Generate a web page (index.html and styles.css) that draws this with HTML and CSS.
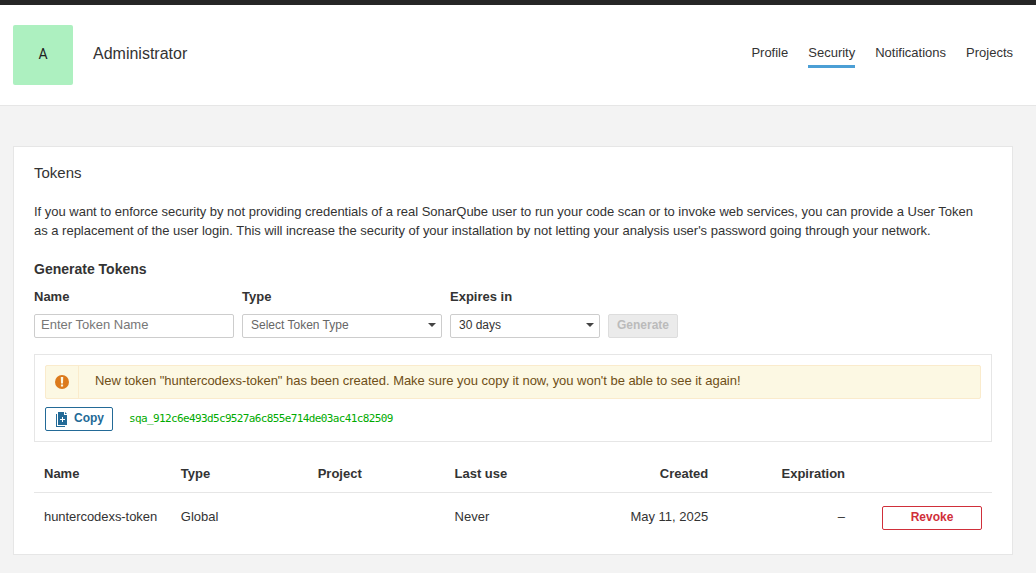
FILE: index.html
```html
<!DOCTYPE html>
<html lang="en">
<head>
<meta charset="utf-8">
<title>Security</title>
<link rel="stylesheet" href="styles.css">
</head>
<body>
<div class="topbar"></div>
<header class="header">
  <div class="avatar">A</div>
  <h1 class="user">Administrator</h1>
  <nav class="tabs">
    <a class="tab">Profile</a>
    <a class="tab active">Security</a>
    <a class="tab">Notifications</a>
    <a class="tab">Projects</a>
  </nav>
</header>
<main class="card">
  <h2 class="title">Tokens</h2>
  <p class="intro">If you want to enforce security by not providing credentials of a real SonarQube user to run your code scan or to invoke web services, you can provide a User Token as a replacement of the user login. This will increase the security of your installation by not letting your analysis user's password going through your network.</p>
  <h3 class="subtitle">Generate Tokens</h3>
  <form class="form">
    <div class="field wide">
      <label class="label">Name</label>
      <input class="input" type="text" placeholder="Enter Token Name">
    </div>
    <div class="field wide">
      <label class="label">Type</label>
      <div class="select placeholder"><span>Select Token Type</span><i class="caret"></i></div>
    </div>
    <div class="field">
      <label class="label">Expires in</label>
      <div class="select"><span>30 days</span><i class="caret"></i></div>
    </div>
    <button class="button generate" type="button" disabled>Generate</button>
  </form>
  <section class="panel">
    <div class="alert">
      <div class="alert-icon">
        <svg width="16" height="16" viewBox="0 0 16 16"><circle cx="8" cy="8" r="7" fill="#dc7a1c"/><path fill="#fcf8e3" d="M6.8 3h2.4l-.2 6.4H7zM6.9 10.5h2.2v2.1H6.9z"/></svg>
      </div>
      <div class="alert-text">New token "huntercodexs-token" has been created. Make sure you copy it now, you won't be able to see it again!</div>
    </div>
    <div class="copy-row">
      <button class="button copy" type="button">
        <svg class="copy-icon" width="16" height="16" viewBox="0 0 16 16"><g fill="#236a97"><path d="M4 1h6v3h3v10H4z"/><path d="M11 1l2 2h-2z"/><path d="M2 3h1v12h8v1H2z"/></g><path d="M8.5 6v5M6 8.5h5" stroke="#fff" fill="none"/></svg>
        <span>Copy</span>
      </button>
      <code class="token">sqa_912c6e493d5c9527a6c855e714de03ac41c82509</code>
    </div>
  </section>
  <table class="table">
    <thead>
      <tr><th>Name</th><th>Type</th><th>Project</th><th>Last use</th><th class="right">Created</th><th class="right">Expiration</th><th></th></tr>
    </thead>
    <tbody>
      <tr><td>huntercodexs-token</td><td>Global</td><td></td><td>Never</td><td class="right">May 11, 2025</td><td class="right">–</td><td class="right"><button class="button revoke" type="button">Revoke</button></td></tr>
    </tbody>
  </table>
</main>
</body>
</html>
```
FILE: styles.css
```css
* { box-sizing: border-box; }
body {
  margin: 0;
  height: 573px;
  overflow: hidden;
  background: #f3f3f3;
  color: #333;
  font: 13px/19px "Liberation Sans", Arial, sans-serif;
}
h1, h2, h3, p { margin: 0; }
.topbar { height: 5px; background: #262626; }
.header {
  display: flex;
  align-items: flex-start;
  height: 101px;
  padding: 20px 23px 0 13px;
  background: #fff;
  border-bottom: 1px solid #e6e6e6;
}
.avatar {
  width: 60px;
  height: 60px;
  border-radius: 2px;
  background: #adf0c0;
  color: #222;
  font: 14px/59px Roboto, sans-serif;
  text-align: center;
}
.user { margin: 17px 0 0 20px; font-size: 16px; line-height: 24px; font-weight: 400; }
.tabs { display: flex; gap: 20px; margin: 18px 0 0 auto; }
.tab { height: 25px; border-bottom: 3px solid transparent; }
.tab.active { border-color: #4b9fd5; }
.card {
  width: 1000px;
  height: 409px;
  margin: 40px 0 0 13px;
  padding: 16px 20px 0;
  background: #fff;
  border: 1px solid #e6e6e6;
}
.title { font-size: 15px; line-height: 20px; font-weight: 400; }
.intro { margin-top: 19px; padding-right: 12px; letter-spacing: -0.015px; }
.subtitle { margin-top: 19px; font-size: 14px; line-height: 20px; }
.form { display: flex; align-items: flex-end; gap: 8px; margin-top: 8px; }
.field { width: 150px; }
.wide { width: 200px; }
.label { display: block; margin-bottom: 8px; font-weight: 700; }
.input, .select {
  display: flex;
  align-items: center;
  justify-content: space-between;
  width: 100%;
  height: 24px;
  border: 1px solid #cdcdcd;
  border-radius: 2px;
  background: #fff;
}
.input { padding: 0 6px 3px; font: inherit; color: #333; }
.input::placeholder { color: #777; opacity: 1; }
.select { padding: 0 5px 2px 8px; font-size: 12px; }
.placeholder { color: #666; }
.caret {
  border: 4px solid transparent;
  border-top-color: #444;
  border-bottom: 0;
}
.button {
  height: 24px;
  padding: 0 8px 2px;
  border: 1px solid;
  border-radius: 2px;
  background: #fff;
  font: 700 12px/20px "Liberation Sans", Arial, sans-serif;
}
.generate { width: 70px; background: #ebebeb; border-color: #ddd; color: #bbb; }
.panel {
  height: 88px;
  margin-top: 16px;
  padding: 10px;
  border: 1px solid #e6e6e6;
}
.alert {
  display: flex;
  height: 34px;
  border: 1px solid #faebcc;
  border-radius: 2px;
  background: #fcf8e3;
  color: #6f4f17;
}
.alert-icon {
  display: flex;
  align-items: center;
  justify-content: center;
  width: 33px;
  border-right: 1px solid #faebcc;
}
.alert-text { padding: 5px 0 0 16px; letter-spacing: -0.033px; }
.copy-row { display: flex; gap: 16px; margin-top: 8px; }
.copy {
  display: flex;
  align-items: center;
  gap: 4px;
  width: 68px;
  padding: 0 8px;
  border-color: #236a97;
  color: #236a97;
}
.copy-icon { flex: none; }
.copy span { margin-top: -2px; }
.token { color: #0a0; font: 11px/23px "DejaVu Sans Mono", monospace; letter-spacing: -0.63px; }
.table { width: 100%; margin-top: 13px; table-layout: fixed; border-collapse: collapse; }
th, td { padding: 0 10px; text-align: left; }
th { height: 37px; border-bottom: 1px solid #e6e6e6; }
td { height: 49px; }
tbody td:first-child { letter-spacing: -0.06px; }
.right { text-align: right; }
.revoke { width: 100px; border-color: #d02f3a; color: #d02f3a; transform: translateY(1px); }
```
